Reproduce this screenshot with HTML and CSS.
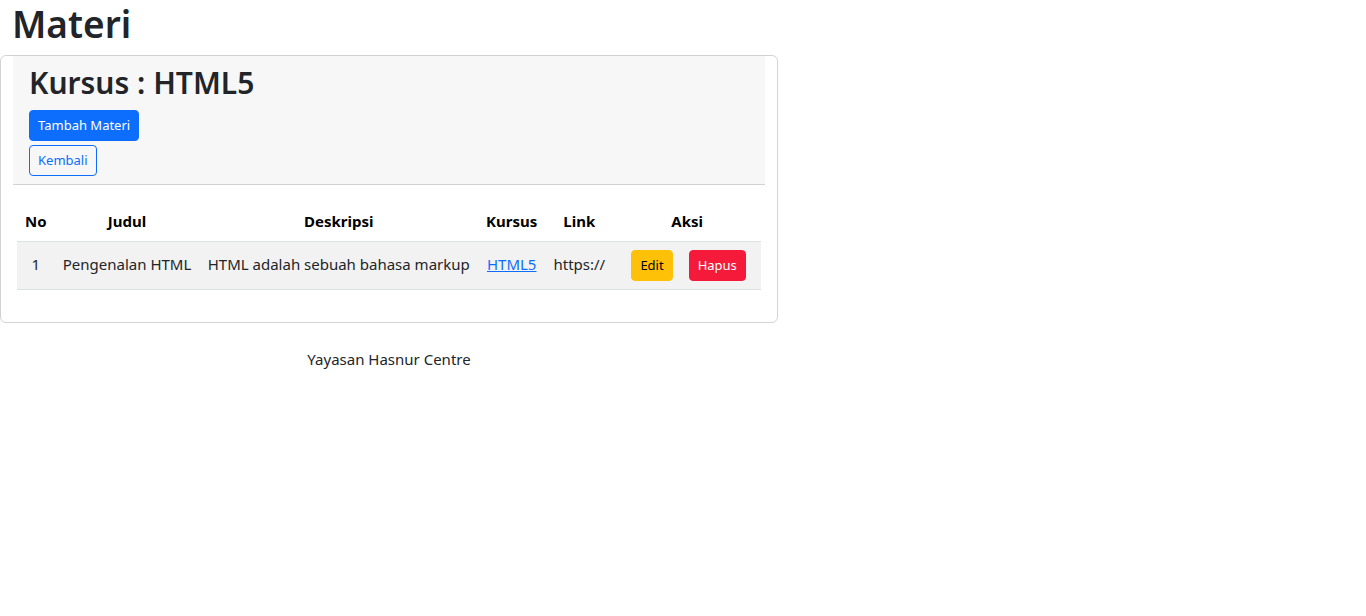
FILE: index.html
```html
<!DOCTYPE html>
<html lang="id">
<head>
<meta charset="utf-8">
<title>Materi</title>
<link rel="stylesheet" href="styles.css">
</head>
<body>
<div class="page">
  <h1 class="title">Materi</h1>
  <div class="card">
    <div class="card-header">
      <h2 class="course">Kursus : HTML5</h2>
      <div class="actions">
        <a class="btn btn-primary" href="#">Tambah Materi</a>
        <a class="btn btn-outline" href="#">Kembali</a>
      </div>
    </div>
    <div class="card-body">
      <table class="table">
        <thead>
          <tr>
            <th>No</th>
            <th>Judul</th>
            <th>Deskripsi</th>
            <th>Kursus</th>
            <th>Link</th>
            <th>Aksi</th>
          </tr>
        </thead>
        <tbody>
          <tr>
            <td>1</td>
            <td>Pengenalan HTML</td>
            <td>HTML adalah sebuah bahasa markup</td>
            <td><a class="link" href="#">HTML5</a></td>
            <td>https://</td>
            <td>
              <div class="row-actions">
                <a class="btn btn-warning" href="#">Edit</a>
                <a class="btn btn-danger" href="#">Hapus</a>
              </div>
            </td>
          </tr>
        </tbody>
      </table>
    </div>
  </div>
  <footer class="footer">Yayasan Hasnur Centre</footer>
</div>
</body>
</html>
```

FILE: styles.css
```css
* { box-sizing: border-box; }
html, body {
  margin: 0;
  padding: 0;
  background: #fff;
}
body {
  font-family: "Noto Sans", "Open Sans", "DejaVu Sans", sans-serif;
  font-size: 15px;
  line-height: 24px;
  color: #212529;
}
.page {
  width: 778px;
}
.title {
  margin: 0 0 7px 0;
  padding: 0 12px;
  font-size: 37px;
  font-weight: 600;
  line-height: 48px;
}
.card {
  border: 1px solid #d3d3d3;
  border-radius: 6px;
  background: #fff;
}
.card-header {
  margin: 0 12px;
  background: #f7f7f7;
  border-bottom: 1px solid #d3d3d3;
  padding: 8px 16px;
}
.course {
  margin: 0 0 8px 0;
  font-size: 30px;
  font-weight: 600;
  line-height: 38px;
}
.actions {
  display: flex;
  flex-direction: column;
  align-items: flex-start;
  gap: 4px;
}
.btn {
  display: inline-block;
  font-size: 13px;
  line-height: 21px;
  padding: 4px 8px;
  border: 1px solid transparent;
  border-radius: 4px;
  text-decoration: none;
}
.btn-primary {
  background: #0d6efd;
  border-color: #0d6efd;
  color: #fff;
}
.btn-outline {
  color: #0d6efd;
  border-color: #0d6efd;
  background: transparent;
}
.btn-warning {
  background: #ffc107;
  border-color: #ffc107;
  color: #000;
}
.btn-danger {
  background: #f61a3a;
  border-color: #f61a3a;
  color: #fff;
}
.card-body {
  padding: 16px;
}
.table {
  width: 100%;
  border-collapse: collapse;
  margin-bottom: 16px;
  text-align: center;
}
.table th {
  font-weight: 700;
  color: #000;
  padding: 8px;
  border-bottom: 1px solid #dee2e6;
}
.table td {
  padding: 8px;
  border-bottom: 1px solid #dee2e6;
  vertical-align: baseline;
  white-space: nowrap;
}
.table tbody tr {
  background: #f2f2f2;
}
.link {
  color: #0d6efd;
  text-decoration: underline;
}
.row-actions {
  display: flex;
  justify-content: center;
  gap: 16px;
  padding: 0 7px 0 10px;
}
.footer {
  text-align: center;
  padding-top: 24px;
}
```
